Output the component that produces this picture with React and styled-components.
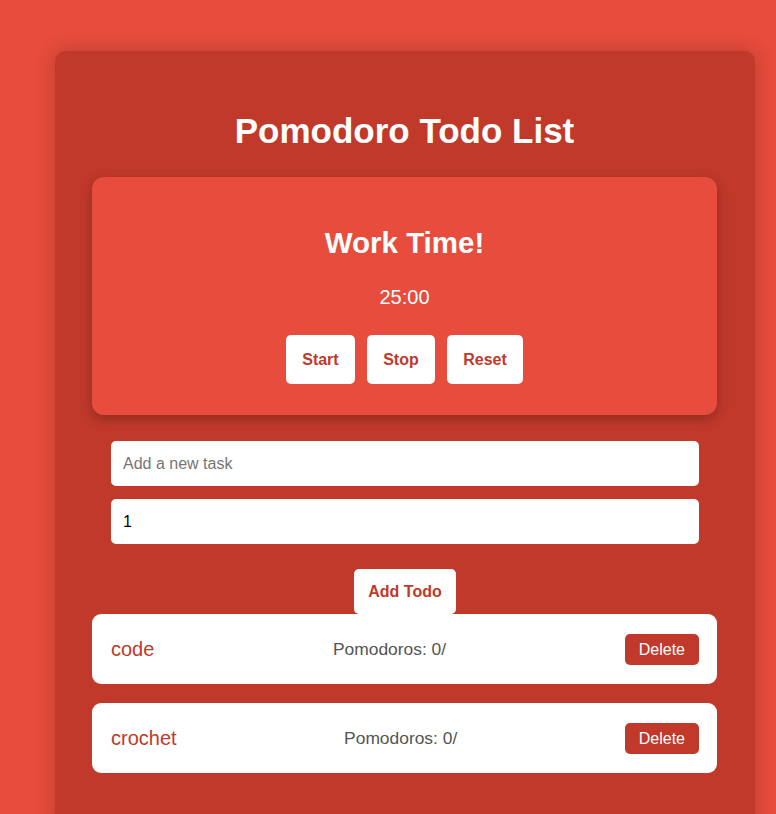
import React, { useState } from "react";
import styled, { createGlobalStyle } from "styled-components";

const GlobalStyle = createGlobalStyle`
  body {
    margin: 0;
    background-color: #e74c3c;
    font-family: "Liberation Sans", Arial, sans-serif;
    overflow: hidden;
  }
`;

const Container = styled.div`
  box-sizing: border-box;
  width: 700px;
  margin: 51px 0 0 55px;
  padding: 60px 38px 60px 37px;
  background-color: #c0392b;
  border-radius: 10px;
  box-shadow: 0 0 20px rgba(0, 0, 0, 0.2);
`;

const Title = styled.h1`
  margin: 0 0 26px;
  font-size: 35px;
  line-height: 40px;
  text-align: center;
  color: #fff;
`;

const TimerCard = styled.div`
  padding: 49px 20px 31px;
  background-color: #e74c3c;
  border-radius: 12px;
  box-shadow: 0 4px 12px rgba(0, 0, 0, 0.25);
  text-align: center;
  color: #fff;

  h2 {
    margin: 0 0 25px;
    font-size: 29.5px;
    line-height: 34px;
  }
  .time {
    margin: 0 0 26px;
    font-size: 20px;
    line-height: 24px;
  }
`;

const ButtonRow = styled.div`
  display: flex;
  justify-content: center;
  gap: 12.5px;
`;

const WhiteButton = styled.button`
  border: none;
  background-color: #fff;
  color: #c0392b;
  font-family: inherit;
  font-size: 16px;
  font-weight: bold;
  line-height: 19px;
  padding: ${(props) => (props.small ? "13px 14px" : "15px 16px")};
  border-radius: 5px;
  cursor: pointer;
`;

const Form = styled.div`
  display: flex;
  flex-direction: column;
  align-items: center;
  gap: 13px;
  padding: 26px 18px 0 19px;

  button {
    margin-top: 12px;
  }
`;

const Input = styled.input`
  box-sizing: border-box;
  width: 100%;
  height: 45px;
  padding: 0 12px;
  border: none;
  border-radius: 5px;
  font-family: inherit;
  font-size: 16px;
  color: #000;
  outline: none;

  &::placeholder {
    color: #757575;
  }
`;

const TodoList = styled.div`
  display: flex;
  flex-direction: column;
  gap: 19px;
`;

const TodoItem = styled.div`
  display: flex;
  align-items: center;
  justify-content: space-between;
  height: 70px;
  box-sizing: border-box;
  padding: 0 18px 0 19px;
  background-color: #fff;
  border-radius: 9px;
`;

const TodoName = styled.span`
  font-size: 20px;
  color: #c0392b;
`;

const TodoCount = styled.span`
  font-size: 17.4px;
  color: #555;
`;

const DeleteButton = styled.button`
  border: none;
  background-color: #c0392b;
  color: #fff;
  font-family: inherit;
  font-size: 16px;
  line-height: 19px;
  padding: 6px 14px;
  border-radius: 5px;
  cursor: pointer;
`;

const App = () => {
  const [todos, setTodos] = useState([
    { id: 1, text: "code", done: 0 },
    { id: 2, text: "crochet", done: 0 },
  ]);
  const [task, setTask] = useState("");
  const [count, setCount] = useState("1");

  const addTodo = () => {
    if (!task.trim()) return;
    setTodos([...todos, { id: Date.now(), text: task, done: 0 }]);
    setTask("");
  };

  const removeTodo = (id) => setTodos(todos.filter((t) => t.id !== id));

  return (
    <>
      <GlobalStyle />
      <Container>
        <Title>Pomodoro Todo List</Title>
        <TimerCard>
          <h2>Work Time!</h2>
          <p className="time">25:00</p>
          <ButtonRow>
            <WhiteButton>Start</WhiteButton>
            <WhiteButton>Stop</WhiteButton>
            <WhiteButton>Reset</WhiteButton>
          </ButtonRow>
        </TimerCard>
        <Form>
          <Input
            placeholder="Add a new task"
            value={task}
            onChange={(e) => setTask(e.target.value)}
          />
          <Input value={count} onChange={(e) => setCount(e.target.value)} />
          <WhiteButton small onClick={addTodo}>
            Add Todo
          </WhiteButton>
        </Form>
        <TodoList>
          {todos.map((todo) => (
            <TodoItem key={todo.id}>
              <TodoName>{todo.text}</TodoName>
              <TodoCount>Pomodoros: {todo.done}/</TodoCount>
              <DeleteButton onClick={() => removeTodo(todo.id)}>
                Delete
              </DeleteButton>
            </TodoItem>
          ))}
        </TodoList>
      </Container>
    </>
  );
};

export default App;
